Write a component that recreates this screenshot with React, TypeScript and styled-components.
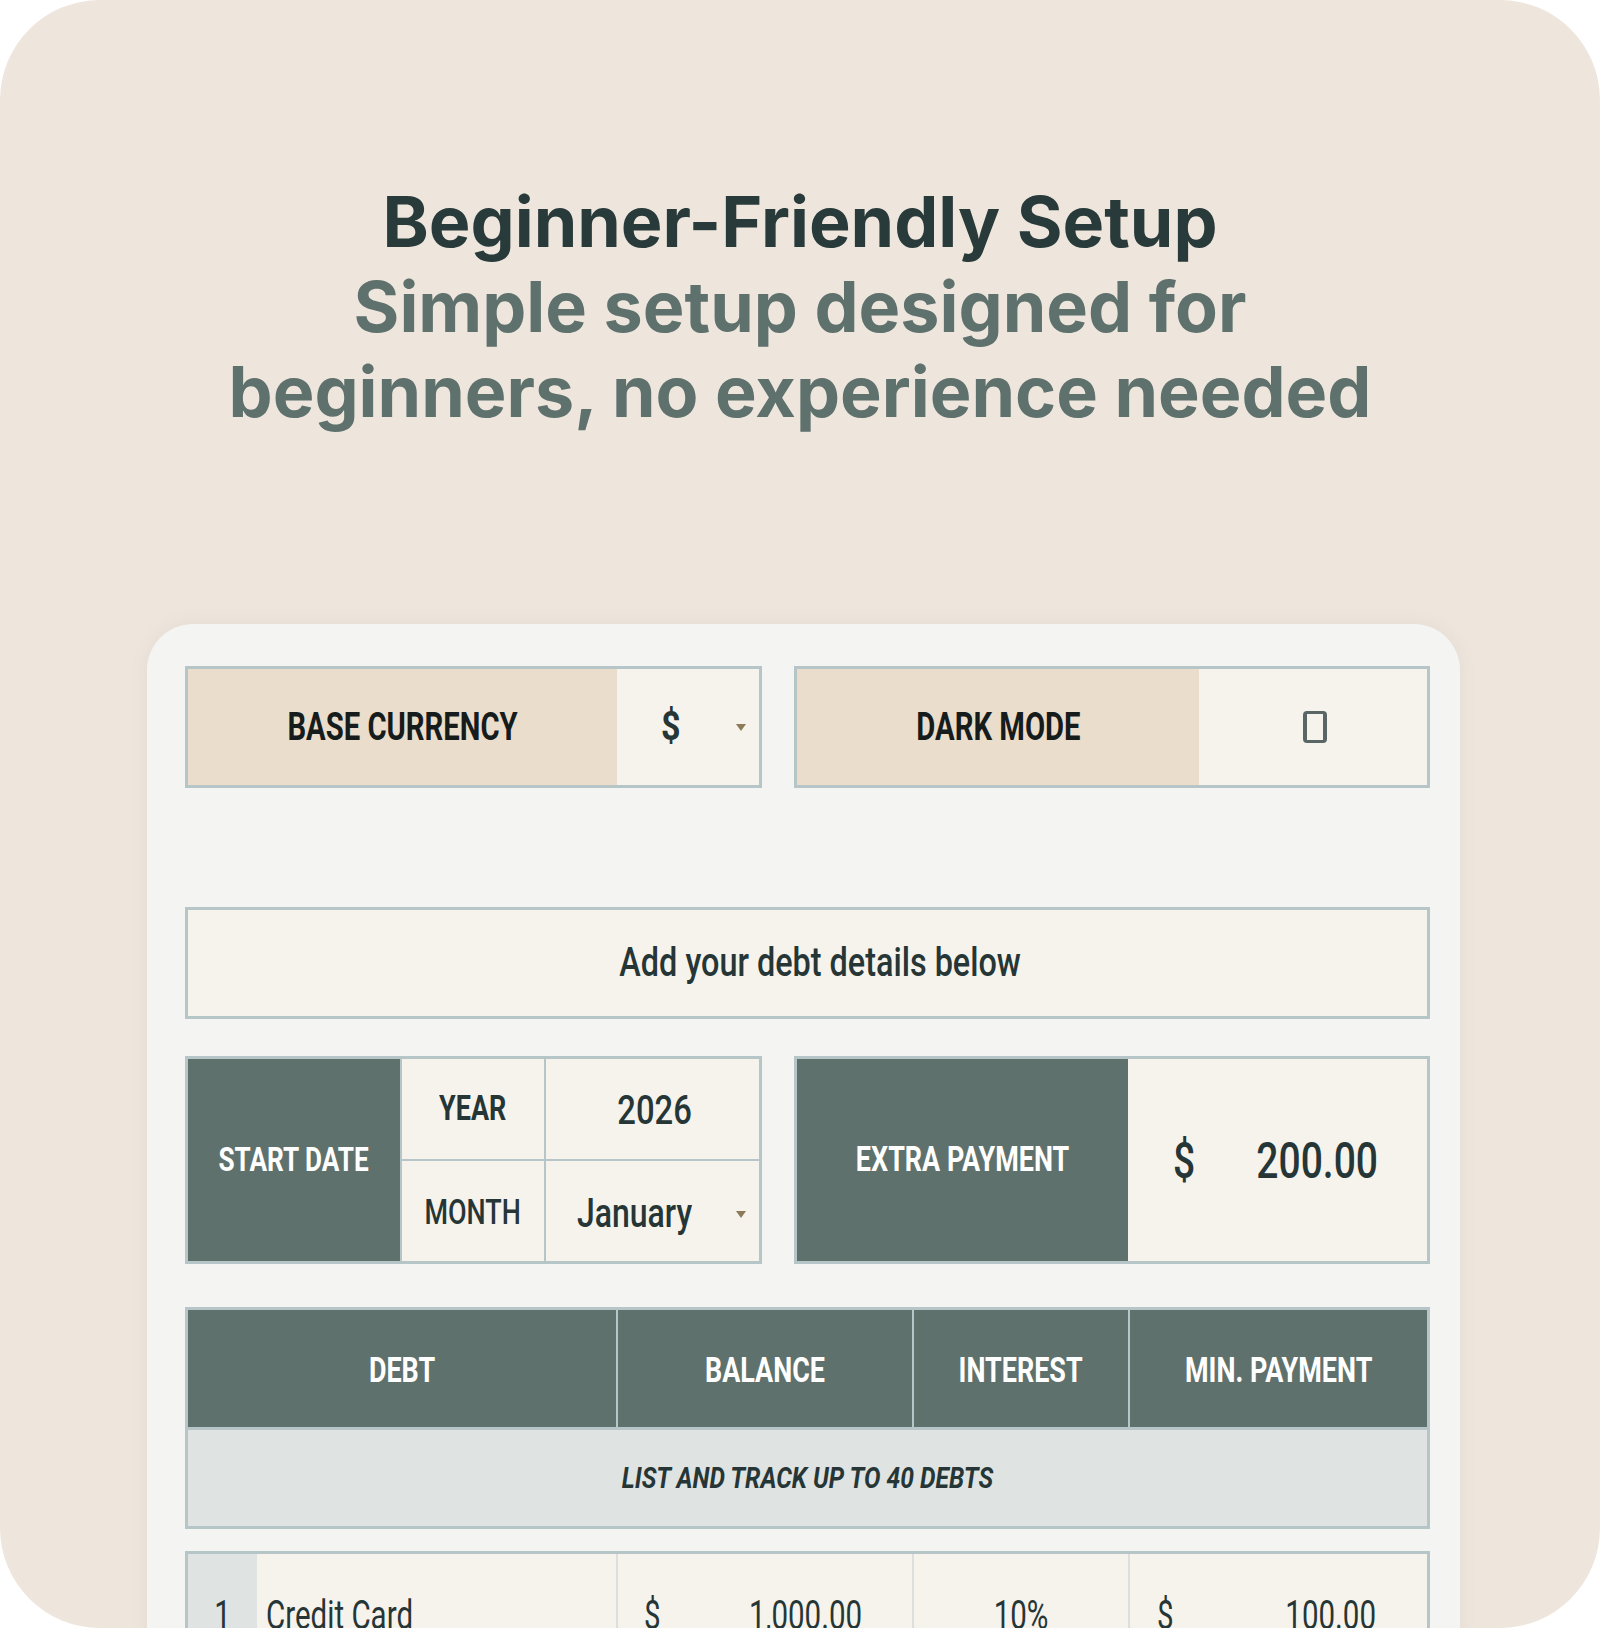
import React from "react";
import styled, { createGlobalStyle, css } from "styled-components";

const GlobalStyle = createGlobalStyle`
  html, body { margin: 0; padding: 0; background: #ffffff; }
  * { box-sizing: border-box; }
`;

const C = {
  frame: "#EEE6DD",
  card: "#F4F4F3",
  beige: "#EADDCB",
  cream: "#F6F3EC",
  dark: "#5F716D",
  border: "#B6C5C8",
  soft: "#DFE3E2",
  divider: "#DCDFDE",
  ink: "#263637",
  black: "#161B1C",
  arrow: "#8C7A58",
  title: "#293A3A",
};

const Frame = styled.div`
  width: 1600px;
  height: 1628px;
  border-radius: 100px;
  overflow: hidden;
  background: ${C.frame};
  display: flex;
  flex-direction: column;
  padding-top: 179px;
`;

const Heading = styled.h1`
  margin: 0 auto;
  max-width: 1200px;
  text-align: center;
  font-family: Inter, "Noto Sans", sans-serif;
  font-weight: 700;
  font-size: 70px;
  line-height: 85px;
  letter-spacing: 0;
`;

const HeadLine = styled.span<{ $muted?: boolean }>`
  display: block;
  color: ${(p) => (p.$muted ? C.dark : C.title)};
`;

const Card = styled.section`
  flex-shrink: 0;
  margin-top: 190px;
  margin-left: 147px;
  width: 1313px;
  background: ${C.card};
  border-radius: 46px;
  padding: 42px 30px 0 38px;
  box-shadow: 0 0 18px rgba(120, 100, 80, 0.08);
  font-family: Roboto, "Liberation Sans", sans-serif;
  color: ${C.ink};
`;

const Squeeze = styled.span<{ $origin?: string; $scale?: number }>`
  display: inline-block;
  white-space: nowrap;
  transform: scaleX(${(p) => p.$scale ?? 0.77});
  transform-origin: ${(p) => p.$origin ?? "center"};
`;

const PairRow = styled.div<{ $mt?: number; $h: number }>`
  display: grid;
  grid-template-columns: 577px 636px;
  column-gap: 32px;
  height: ${(p) => p.$h}px;
  margin-top: ${(p) => p.$mt ?? 0}px;
`;

const Box = styled.div<{ $cols: string }>`
  display: grid;
  grid-template-columns: ${(p) => p.$cols};
  border: 3px solid ${C.border};
  background: ${C.cream};
`;

type Tone = "beige" | "cream" | "dark" | "soft";
const toneBg = (t: Tone) =>
  t === "beige" ? C.beige : t === "dark" ? C.dark : t === "soft" ? C.soft : C.cream;

const Cell = styled.div<{ $tone?: Tone; $justify?: string; $pad?: string }>`
  display: flex;
  align-items: center;
  justify-content: ${(p) => p.$justify ?? "center"};
  padding: ${(p) => p.$pad ?? "0"};
  background: ${(p) => toneBg(p.$tone ?? "cream")};
  min-width: 0;
  overflow: hidden;
`;

const Text = styled.span<{ $size: number; $weight?: number; $color?: string; $italic?: boolean }>`
  font-size: ${(p) => p.$size}px;
  font-weight: ${(p) => p.$weight ?? 400};
  color: ${(p) => p.$color ?? C.ink};
  font-style: ${(p) => (p.$italic ? "italic" : "normal")};
  line-height: 1.15;
`;

const DropArrow = styled.span`
  width: 0;
  height: 0;
  border-left: 5px solid transparent;
  border-right: 5px solid transparent;
  border-top: 7px solid ${C.arrow};
  flex-shrink: 0;
`;

const CheckBox = styled.span`
  width: 24px;
  height: 32px;
  margin-left: 4px;
  border-style: solid;
  border-color: #5A6666;
  border-width: 3px 4px;
  border-radius: 4px;
`;

const Banner = styled.div`
  margin-top: 119px;
  height: 112px;
  padding-left: 26px;
  border: 3px solid ${C.border};
  background: ${C.cream};
  display: flex;
  align-items: center;
  justify-content: center;
`;

const DateGrid = styled.div`
  display: grid;
  grid-template-columns: 212px 142px 1fr;
  grid-template-rows: 1fr 1fr;
  gap: 2px;
  background: ${C.border};
  border: 3px solid ${C.border};
`;

const SpanRows = styled(Cell)`
  grid-row: 1 / span 2;
`;

const Table = styled.div<{ $mt: number; $open?: boolean }>`
  margin-top: ${(p) => p.$mt}px;
  border: 3px solid ${C.border};
  ${(p) =>
    p.$open &&
    css`
      border-bottom: none;
    `}
`;

const HeadRow = styled.div`
  display: grid;
  grid-template-columns: 428px 294px 214px 1fr;
  gap: 2px;
  height: 117px;
  background: ${C.border};
`;

const HeadCell = styled(Cell)`
  padding-top: 6px;
`;

const SubRow = styled.div`
  height: 99px;
  border-top: 3px solid ${C.border};
  background: ${C.soft};
  display: flex;
  align-items: center;
  justify-content: center;
`;

const DataRow = styled.div`
  display: grid;
  grid-template-columns: 69px 359px 296px 216px 1fr;
  height: 140px;
  background: ${C.cream};
`;

const DataCell = styled(Cell)<{ $divider?: boolean }>`
  align-items: flex-start;
  padding-top: 38px;
  ${(p) =>
    p.$divider &&
    css`
      border-left: 2px solid ${C.divider};
    `}
`;

const Money: React.FC<{ value: string; size: number; weight?: number; scale?: number }> = ({
  value,
  size,
  weight,
  scale,
}) => (
  <>
    <Text $size={size} $weight={weight ?? 500}>
      <Squeeze $origin="left" $scale={scale}>$</Squeeze>
    </Text>
    <Text $size={size} $weight={weight ?? 500}>
      <Squeeze $origin="right" $scale={scale}>{value}</Squeeze>
    </Text>
  </>
);

const DATA_SCALE = 0.72;

export default function App() {
  return (
    <>
      <GlobalStyle />
      <Frame>
        <Heading>
          <HeadLine>Beginner-Friendly Setup</HeadLine>
          <HeadLine $muted>Simple setup designed for beginners, no experience needed</HeadLine>
        </Heading>

        <Card>
          <PairRow $h={122}>
            <Box $cols="429px 1fr">
              <Cell $tone="beige">
                <Text $size={39} $weight={700} $color={C.black}>
                  <Squeeze $scale={0.75}>BASE CURRENCY</Squeeze>
                </Text>
              </Cell>
              <Cell $justify="space-between" $pad="0 13px 0 44px">
                <Text $size={40} $weight={700}>
                  <Squeeze $origin="left" $scale={0.85}>$</Squeeze>
                </Text>
                <DropArrow />
              </Cell>
            </Box>
            <Box $cols="402px 1fr">
              <Cell $tone="beige">
                <Text $size={39} $weight={700} $color={C.black}>
                  <Squeeze $scale={0.75}>DARK MODE</Squeeze>
                </Text>
              </Cell>
              <Cell>
                <CheckBox />
              </Cell>
            </Box>
          </PairRow>

          <Banner>
            <Text $size={41} $weight={500}>
              <Squeeze $scale={0.79}>Add your debt details below</Squeeze>
            </Text>
          </Banner>

          <PairRow $mt={37} $h={208}>
            <DateGrid>
              <SpanRows $tone="dark">
                <Text $size={34} $weight={700} $color="#FFFFFF">
                  <Squeeze>START DATE</Squeeze>
                </Text>
              </SpanRows>
              <Cell>
                <Text $size={35} $weight={700}>
                  <Squeeze>YEAR</Squeeze>
                </Text>
              </Cell>
              <Cell $pad="4px 0 0 4px">
                <Text $size={41} $weight={500}>
                  <Squeeze $scale={0.8}>2026</Squeeze>
                </Text>
              </Cell>
              <Cell $pad="4px 0 0 0">
                <Text $size={35} $weight={500}>
                  <Squeeze>MONTH</Squeeze>
                </Text>
              </Cell>
              <Cell $justify="space-between" $pad="6px 13px 0 31px">
                <Text $size={41} $weight={500}>
                  <Squeeze $origin="left" $scale={0.78}>January</Squeeze>
                </Text>
                <DropArrow />
              </Cell>
            </DateGrid>
            <Box $cols="331px 1fr">
              <Cell $tone="dark">
                <Text $size={35} $weight={700} $color="#FFFFFF">
                  <Squeeze>EXTRA PAYMENT</Squeeze>
                </Text>
              </Cell>
              <Cell $justify="space-between" $pad="4px 49px 0 45px">
                <Money value="200.00" size={50} scale={0.78} />
              </Cell>
            </Box>
          </PairRow>

          <Table $mt={43}>
            <HeadRow>
              {["DEBT", "BALANCE", "INTEREST", "MIN. PAYMENT"].map((h) => (
                <HeadCell key={h} $tone="dark">
                  <Text $size={35} $weight={700} $color="#FFFFFF">
                    <Squeeze>{h}</Squeeze>
                  </Text>
                </HeadCell>
              ))}
            </HeadRow>
            <SubRow>
              <Text $size={30} $weight={700} $italic>
                <Squeeze $scale={0.82}>LIST AND TRACK UP TO 40 DEBTS</Squeeze>
              </Text>
            </SubRow>
          </Table>

          <Table $mt={22} $open>
            <DataRow>
              <DataCell $tone="soft">
                <Text $size={41}>
                  <Squeeze $scale={DATA_SCALE}>1</Squeeze>
                </Text>
              </DataCell>
              <DataCell $justify="flex-start" $pad="38px 0 0 9px">
                <Text $size={41}>
                  <Squeeze $origin="left" $scale={DATA_SCALE}>Credit Card</Squeeze>
                </Text>
              </DataCell>
              <DataCell $divider $justify="space-between" $pad="38px 50px 0 26px">
                <Money value="1,000.00" size={41} weight={400} scale={DATA_SCALE} />
              </DataCell>
              <DataCell $divider>
                <Text $size={41}>
                  <Squeeze $scale={DATA_SCALE}>10%</Squeeze>
                </Text>
              </DataCell>
              <DataCell $divider $justify="space-between" $pad="38px 51px 0 27px">
                <Money value="100.00" size={41} weight={400} scale={DATA_SCALE} />
              </DataCell>
            </DataRow>
          </Table>
        </Card>
      </Frame>
    </>
  );
}
